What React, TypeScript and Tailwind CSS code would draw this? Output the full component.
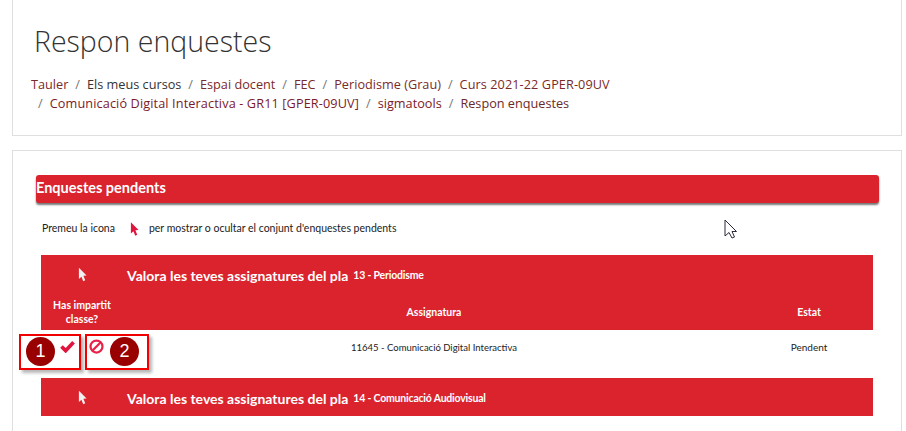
import React from 'react';

const crumbs = [
  { label: 'Tauler', color: 'text-[#7a2a2a]' },
  { label: 'Els meus cursos', color: 'text-[#333333]' },
  { label: 'Espai docent', color: 'text-[#7a2a2a]' },
  { label: 'FEC', color: 'text-[#7a2a2a]' },
  { label: 'Periodisme (Grau)', color: 'text-[#7a2a2a]' },
  { label: 'Curs 2021-22 GPER-09UV', color: 'text-[#7a2a2a] tracking-[0.08px]' },
  { label: 'Comunicació Digital Interactiva - GR11 [GPER-09UV]', color: 'text-[#7a1a2a] tracking-[0.12px]' },
  { label: 'sigmatools', color: 'text-[#7a1a2a]' },
  { label: 'Respon enquestes', color: 'text-[#6a2a2a]' },
];

const Arrow: React.FC<{ className: string; fill: string }> = ({ className, fill }) => (
  <svg viewBox="0 0 10 16" className={className}>
    <path d="M1 0.5 L9.5 9 L6 9.5 L8 14.5 L5.8 15.5 L3.8 10.5 L1 13 Z" fill={fill} />
  </svg>
);

const PlanRow: React.FC<{ num: string; name: string; className: string }> = ({ num, name, className }) => (
  <div className={`flex items-center ${className}`}>
    <div className="w-[86px] flex justify-center pr-[4px]">
      <Arrow className="w-[9px] h-[15px]" fill="#f2f2f2" />
    </div>
    <span className="text-[14px] font-bold pt-[2px]">Valora les teves assignatures del pla</span>
    <span className="text-[10.5px] font-bold tracking-[-0.2px] ml-[5px] pt-[3px]">{num} - {name}</span>
  </div>
);

const Callout: React.FC<{ n: string; className: string; circle: string }> = ({ n, className, circle }) => (
  <div className={`absolute top-[4px] h-[36px] border-2 border-[#f00000] shadow-[3px_3px_3px_#b8b8b8] ${className}`}>
    <div className={`absolute top-[1px] w-[29px] h-[29px] rounded-full bg-[#990000] text-white flex items-center justify-center text-[18px] font-['Liberation_Sans',sans-serif] ${circle}`}>
      {n}
    </div>
  </div>
);

const App: React.FC = () => {
  return (
    <div className="w-[906px] h-[431px] overflow-hidden bg-white pl-[12px] pr-[4px] font-['Lato',sans-serif]">
      <div className="h-[136px] border-x border-b border-[#dfdfdf] pl-[18px] pr-[18px] pt-[20px] font-['Open_Sans',sans-serif]">
        <h1 className="text-[28.5px] leading-[42px] font-light text-[#333333] pl-[3px]">Respon enquestes</h1>
        <div className="mt-[13px] flex flex-wrap text-[12.7px] leading-[19px] w-[640px]">
          {crumbs.map((c, i) => (
            <span key={c.label} className="flex whitespace-nowrap">
              {i > 0 && <span className="px-[7px] text-[#777777]">/</span>}
              <span className={c.color}>{c.label}</span>
            </span>
          ))}
        </div>
      </div>

      <div className="mt-[14px] h-[281px] border-x border-t border-[#dfdfdf] pl-[23px] pr-[22px] pt-[24px]">
        <div className="h-[28px] bg-[#db232d] rounded-[3px] shadow-[0_2px_2px_#777777] flex items-center text-white text-[14.5px] font-bold pb-[3px]">
          Enquestes pendents
        </div>

        <div className="mt-[16px] pl-[6px] flex items-center text-[10.5px] h-[20px] text-[#222222]">
          <span>Premeu la icona</span>
          <Arrow className="w-[9px] h-[16px] ml-[15px]" fill="#e0143c" />
          <span className="ml-[10px]">per mostrar o ocultar el conjunt d'enquestes pendents</span>
        </div>

        <div className="mt-[16px] ml-[5px] w-[832px]">
          <div className="bg-[#db232d] text-white h-[75px]">
            <PlanRow num="13" name="Periodisme" className="h-[38px]" />
            <div className="grid grid-cols-[82px_622px_128px] text-[10.5px] font-bold text-center leading-[14px] pt-[5px]">
              <div>Has impartit<br />classe?</div>
              <div className="pt-[7px]">Assignatura</div>
              <div className="pt-[7px]">Estat</div>
            </div>
          </div>

          <div className="relative grid grid-cols-[82px_622px_128px] h-[48px] text-center text-[#222222]">
            <div className="relative">
              <svg viewBox="0 0 16 14" className="absolute left-[19px] top-[10px] w-[15px] h-[13px]">
                <path d="M1.5 7 L6 11.5 L14.5 2.5" fill="none" stroke="#e0143c" strokeWidth="4" />
              </svg>
              <svg viewBox="0 0 16 16" className="absolute left-[48px] top-[9px] w-[15px] h-[15px]">
                <circle cx="8" cy="8" r="6.4" fill="none" stroke="#e8234a" strokeWidth="2.4" />
                <path d="M3.5 12.5 L12.5 3.5" stroke="#e8234a" strokeWidth="2.4" />
              </svg>
            </div>
            <div className="pt-[10px] text-[9.5px] leading-[15px]">11645 - Comunicació Digital Interactiva</div>
            <div className="pt-[10px] text-[10px] leading-[15px]">Pendent</div>
            <Callout n="1" className="left-[-22px] w-[62px]" circle="left-[5px]" />
            <Callout n="2" className="left-[44px] w-[64px]" circle="left-[23px]" />
          </div>

          <PlanRow num="14" name="Comunicació Audiovisual" className="bg-[#db232d] text-white h-[38px]" />
        </div>
      </div>

      <svg viewBox="0 0 14 20" className="absolute left-[724px] top-[219px] w-[14px] h-[20px]">
        <path d="M1 1 L1 17 L5 13.5 L8 19 L10.5 18 L8 12.5 L12.5 12.5 Z" fill="#ffffff" stroke="#2a2a3a" strokeWidth="1" />
      </svg>
    </div>
  );
};

export default App;
